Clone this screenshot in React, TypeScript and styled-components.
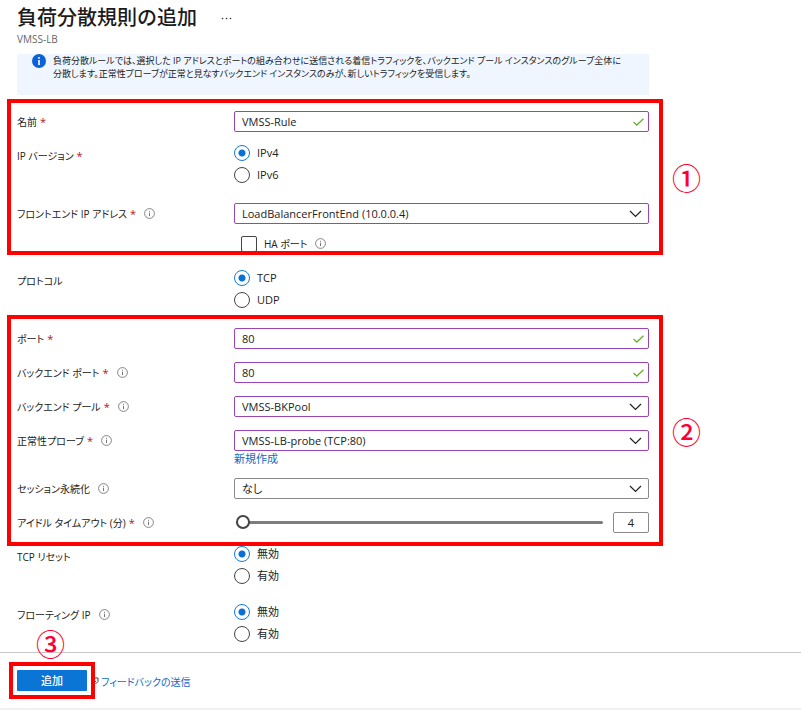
import { useState } from "react";
import type { ReactNode } from "react";
import styled, { createGlobalStyle } from "styled-components";

const GlobalStyle = createGlobalStyle`
  *, *::before, *::after { box-sizing: border-box; }
  body {
    margin: 0;
    background: #fff;
    color: #222;
    font-family: "Open Sans", "Noto Sans CJK JP", sans-serif;
    font-size: 11px;
    line-height: 16px;
    font-feature-settings: "palt";
  }
  button, input, select { font: inherit; color: inherit; font-feature-settings: inherit; margin: 0; }
`;

const red = "#ff0000";

const Page = styled.main`
  min-height: 100vh;
  display: flex;
  flex-direction: column;
`;

const Header = styled.header`
  padding: 4px 17px 0;
`;

const TitleRow = styled.div`
  display: flex;
  align-items: center;
  gap: 24px;
`;

const Title = styled.h1`
  margin: 0;
  font-size: 20px;
  line-height: 28px;
  font-weight: 500;
  font-feature-settings: normal;
  color: #1b1b1b;
`;

const MoreButton = styled.button`
  border: 0;
  padding: 0;
  background: none;
  display: flex;
`;

const Subtitle = styled.p`
  margin: 0;
  font-size: 10px;
  line-height: 14px;
  color: #666;
`;

const Band = styled.div`
  display: grid;
  grid-template-columns: minmax(0, 1fr) 138px;
  align-items: center;
`;

const Banner = styled.div`
  display: flex;
  gap: 7px;
  margin: 8px 14px 4px 17px;
  min-height: 41px;
  padding-left: 15px;
  background: #eff6ff;
`;

const BannerIcon = styled.svg`
  flex: none;
`;

const BannerText = styled.p`
  margin: 0;
  font-size: 9px;
  line-height: 13px;
`;

const Group = styled.section<{ $marked?: boolean; $top: number; $bottom: number }>`
  margin-left: 7px;
  border: 0 solid ${(p) => (p.$marked ? red : "transparent")};
  border-width: ${(p) => (p.$marked ? "4px" : "0 4px")};
  padding: ${(p) => `${p.$top}px 10px ${p.$bottom}px 6px`};
`;

const FormRow = styled.div<{ $gap?: number }>`
  display: grid;
  grid-template-columns: 217px minmax(0, 1fr);
  margin-top: ${(p) => p.$gap ?? 0}px;
`;

const LabelCell = styled.div`
  display: flex;
  align-items: center;
  align-self: start;
  gap: 8px;
  height: 21px;
  font-size: 10px;
`;

const Star = styled.span`
  color: #b3141d;
  font-size: 11px;
  margin-left: 3px;
`;

const InfoButton = styled.button`
  border: 0;
  padding: 0;
  background: none;
  display: flex;
  color: #777;
`;

const Field = styled.div`
  position: relative;
  min-width: 0;
`;

const fieldBox = `
  display: block;
  width: 100%;
  height: 21px;
  padding: 0 28px 0 7px;
  border-radius: 2px;
  background: #fff;
  line-height: 19px;
  appearance: none;
`;

const TextInput = styled.input`
  ${fieldBox}
  border: 1px solid #9b45b2;
`;

const Select = styled.select<{ $plain?: boolean }>`
  ${fieldBox}
  border: 1px solid ${(p) => (p.$plain ? "#8a8a8a" : "#9b45b2")};
`;

const Adornment = styled.span<{ $right: number }>`
  position: absolute;
  top: 0;
  right: ${(p) => p.$right}px;
  height: 21px;
  display: flex;
  align-items: center;
  pointer-events: none;
`;

const Choices = styled.div`
  display: flex;
  flex-direction: column;
  gap: 6px;
`;

const Choice = styled.label`
  display: flex;
  align-items: center;
  gap: 7px;
  height: 16px;
`;

const Radio = styled.input`
  appearance: none;
  width: 16px;
  height: 16px;
  border: 1px solid #444;
  border-radius: 50%;
  background: #fff;
  &:checked {
    border-color: #0f7bd8;
    background: radial-gradient(circle, #0a6fd6 0 3px, #fff 4px);
  }
`;

const CheckRow = styled.div`
  display: flex;
  align-items: center;
  gap: 8px;
  height: 15px;
  margin: 12px 0 0 224px;
  overflow: hidden;
  font-size: 10px;
`;

const CheckLabel = styled.label`
  display: flex;
  align-self: flex-start;
  gap: 7px;
`;

const Checkbox = styled.input`
  appearance: none;
  width: 16px;
  height: 16px;
  border: 1px solid #444;
  border-radius: 2px;
`;

const Link = styled.a`
  color: #0a6cc9;
  text-decoration: none;
`;

const FieldLink = styled(Link)`
  display: block;
  line-height: 16px;
`;

const SliderLine = styled.div`
  display: flex;
  align-items: center;
  gap: 10px;
  padding-left: 2px;
`;

const Slider = styled.input`
  appearance: none;
  flex: 1;
  min-width: 0;
  height: 21px;
  background: none;
  &::-webkit-slider-runnable-track {
    height: 3px;
    border-radius: 2px;
    background: #7d7d7d;
  }
  &::-webkit-slider-thumb {
    appearance: none;
    width: 14px;
    height: 14px;
    margin-top: -6px;
    border: 2px solid #444;
    border-radius: 50%;
    background: #fff;
  }
`;

const NumberBox = styled.input`
  width: 36px;
  height: 21px;
  padding: 0;
  border: 1px solid #8a8a8a;
  border-radius: 2px;
  text-align: center;
`;

const Marker = styled.span`
  justify-self: start;
  margin-left: 9px;
  font-family: "Noto Sans CJK JP", sans-serif;
  font-size: 29px;
  line-height: 28px;
  font-weight: 500;
  font-feature-settings: normal;
  color: #ff0033;
`;

const Footer = styled.footer`
  flex: 1;
  display: flex;
  align-items: flex-start;
  margin-top: 10px;
  padding: 9px 9px 0;
  border-top: 1px solid #c8c8c8;
  border-bottom: 2px solid #f0f0f0;
`;

const SubmitFrame = styled.div`
  position: relative;
  z-index: 1;
  padding: 4px;
  border: 4px solid ${red};
  margin-right: -4px;
`;

const SubmitMarker = styled(Marker)`
  position: absolute;
  left: 14px;
  bottom: 38px;
`;

const SubmitButton = styled.button`
  display: block;
  width: 70px;
  height: 21px;
  padding: 0;
  border: 0;
  border-radius: 1px;
  background: #0b75d6;
  color: #fff;
  font-weight: 500;
`;

const Feedback = styled(Link)`
  display: flex;
  align-items: center;
  gap: 1px;
  margin-top: 12px;
  font-size: 10px;
`;

function InfoMark() {
  return (
    <InfoButton type="button" aria-label="情報">
      <svg width="11" height="11" viewBox="0 0 11 11" fill="none" stroke="currentColor">
        <circle cx="5.5" cy="5.5" r="4.9" strokeWidth="0.9" />
        <path d="M5.5 4.7v3.4M5.5 2.8v1" />
      </svg>
    </InfoButton>
  );
}

const Chevron = () => (
  <Adornment $right={7}>
    <svg width="13" height="8" viewBox="0 0 13 8" fill="none" stroke="#222" strokeWidth="1.2">
      <path d="M1 1l5.5 5.5L12 1" />
    </svg>
  </Adornment>
);

const Check = () => (
  <Adornment $right={5}>
    <svg width="11" height="8" viewBox="0 0 11 8" fill="none" stroke="#66b22e" strokeWidth="1.3">
      <path d="M.5 4l3.3 3L10.5.7" />
    </svg>
  </Adornment>
);

type LabelProps = { text: string; htmlFor?: string; id?: string; required?: boolean; info?: boolean };

function RowLabel({ text, htmlFor, id, required, info }: LabelProps) {
  return (
    <LabelCell>
      <label htmlFor={htmlFor} id={id}>
        {text}
        {required && <Star>*</Star>}
      </label>
      {info && <InfoMark />}
    </LabelCell>
  );
}

type TextRowProps = { id: string; label: string; value: string; info?: boolean; gap?: number };

function TextRow({ id, label, value, info, gap }: TextRowProps) {
  return (
    <FormRow $gap={gap}>
      <RowLabel text={label} htmlFor={id} required info={info} />
      <Field>
        <TextInput id={id} defaultValue={value} />
        <Check />
      </Field>
    </FormRow>
  );
}

type SelectRowProps = TextRowProps & { plain?: boolean; children?: ReactNode };

function SelectRow({ id, label, value, gap, plain, children }: SelectRowProps) {
  return (
    <FormRow $gap={gap}>
      <RowLabel text={label} htmlFor={id} required={!plain} info />
      <Field>
        <Select id={id} $plain={plain}>
          <option>{value}</option>
        </Select>
        <Chevron />
        {children}
      </Field>
    </FormRow>
  );
}

type RadioRowProps = { name: string; label: string; options: string[]; required?: boolean; info?: boolean; gap?: number };

function RadioRow({ name, label, options, required, info, gap }: RadioRowProps) {
  return (
    <FormRow $gap={gap} role="radiogroup" aria-labelledby={`${name}-label`}>
      <RowLabel id={`${name}-label`} text={label} required={required} info={info} />
      <Choices>
        {options.map((option, i) => (
          <Choice key={option}>
            <Radio type="radio" name={name} defaultChecked={i === 0} />
            {option}
          </Choice>
        ))}
      </Choices>
    </FormRow>
  );
}

export default function App() {
  const [timeout, setTimeoutMinutes] = useState(4);
  const change = (value: string) => setTimeoutMinutes(Number(value));

  return (
    <Page>
      <GlobalStyle />
      <Header>
        <TitleRow>
          <Title>負荷分散規則の追加</Title>
          <MoreButton type="button" aria-label="その他">
            <svg width="11" height="3" viewBox="0 0 11 3" fill="#333">
              <circle cx="1.5" cy="1.5" r="0.8" />
              <circle cx="5.5" cy="1.5" r="0.8" />
              <circle cx="9.5" cy="1.5" r="0.8" />
            </svg>
          </MoreButton>
        </TitleRow>
        <Subtitle>VMSS-LB</Subtitle>
      </Header>

      <Band>
        <Banner>
          <BannerIcon width="14" height="14" viewBox="0 0 14 14">
            <circle cx="7" cy="7" r="7" fill="#0b61d8" />
            <path d="M7 6v5M7 3v1.7" stroke="#fff" strokeWidth="1.6" />
          </BannerIcon>
          <BannerText>
            負荷分散ルールでは、選択した IP アドレスとポートの組み合わせに送信される着信トラフィックを、バックエンド プール インスタンスのグループ全体に
            <br />
            分散します。正常性プローブが正常と見なすバックエンド インスタンスのみが、新しいトラフィックを受信します。
          </BannerText>
        </Banner>
      </Band>

      <Band>
        <Group $marked $top={8} $bottom={0}>
          <TextRow id="name" label="名前" value="VMSS-Rule" />
          <RadioRow name="ip-version" label="IP バージョン" options={["IPv4", "IPv6"]} required gap={13} />
          <SelectRow id="frontend" label="フロントエンド IP アドレス" value="LoadBalancerFrontEnd (10.0.0.4)" gap={20} />
          <CheckRow>
            <CheckLabel>
              <Checkbox type="checkbox" />
              HA ポート
            </CheckLabel>
            <InfoMark />
          </CheckRow>
        </Group>
        <Marker>①</Marker>
      </Band>

      <Band>
        <Group $top={15} $bottom={7}>
          <RadioRow name="protocol" label="プロトコル" options={["TCP", "UDP"]} />
        </Group>
      </Band>

      <Band>
        <Group $marked $top={9} $bottom={9}>
          <TextRow id="port" label="ポート" value="80" />
          <TextRow id="backend-port" label="バックエンド ポート" value="80" info gap={13} />
          <SelectRow id="backend-pool" label="バックエンド プール" value="VMSS-BKPool" gap={13} />
          <SelectRow id="probe" label="正常性プローブ" value="VMSS-LB-probe (TCP:80)" gap={13}>
            <FieldLink href="#new-probe">新規作成</FieldLink>
          </SelectRow>
          <SelectRow id="persistence" label="セッション永続化" value="なし" gap={11} plain />
          <FormRow $gap={13}>
            <RowLabel text="アイドル タイムアウト (分)" htmlFor="timeout" required info />
            <SliderLine>
              <Slider id="timeout" type="range" min={4} max={30} value={timeout} onChange={(e) => change(e.target.value)} />
              <NumberBox aria-label="アイドル タイムアウト (分)" inputMode="numeric" value={timeout} onChange={(e) => change(e.target.value)} />
            </SliderLine>
          </FormRow>
        </Group>
        <Marker>②</Marker>
      </Band>

      <Band>
        <Group $top={0} $bottom={0}>
          <RadioRow name="tcp-reset" label="TCP リセット" options={["無効", "有効"]} />
          <RadioRow name="floating-ip" label="フローティング IP" options={["無効", "有効"]} info gap={20} />
        </Group>
      </Band>

      <Footer>
        <SubmitFrame>
          <SubmitMarker>③</SubmitMarker>
          <SubmitButton type="submit">追加</SubmitButton>
        </SubmitFrame>
        <Feedback href="#feedback">
          <svg width="9" height="12" viewBox="0 0 9 12" fill="none" stroke="#444">
            <path d="M1 2h6v3.5L4.5 8" />
            <path d="M3 4l2 2" stroke="#0a6cc9" />
          </svg>
          フィードバックの送信
        </Feedback>
      </Footer>
    </Page>
  );
}
